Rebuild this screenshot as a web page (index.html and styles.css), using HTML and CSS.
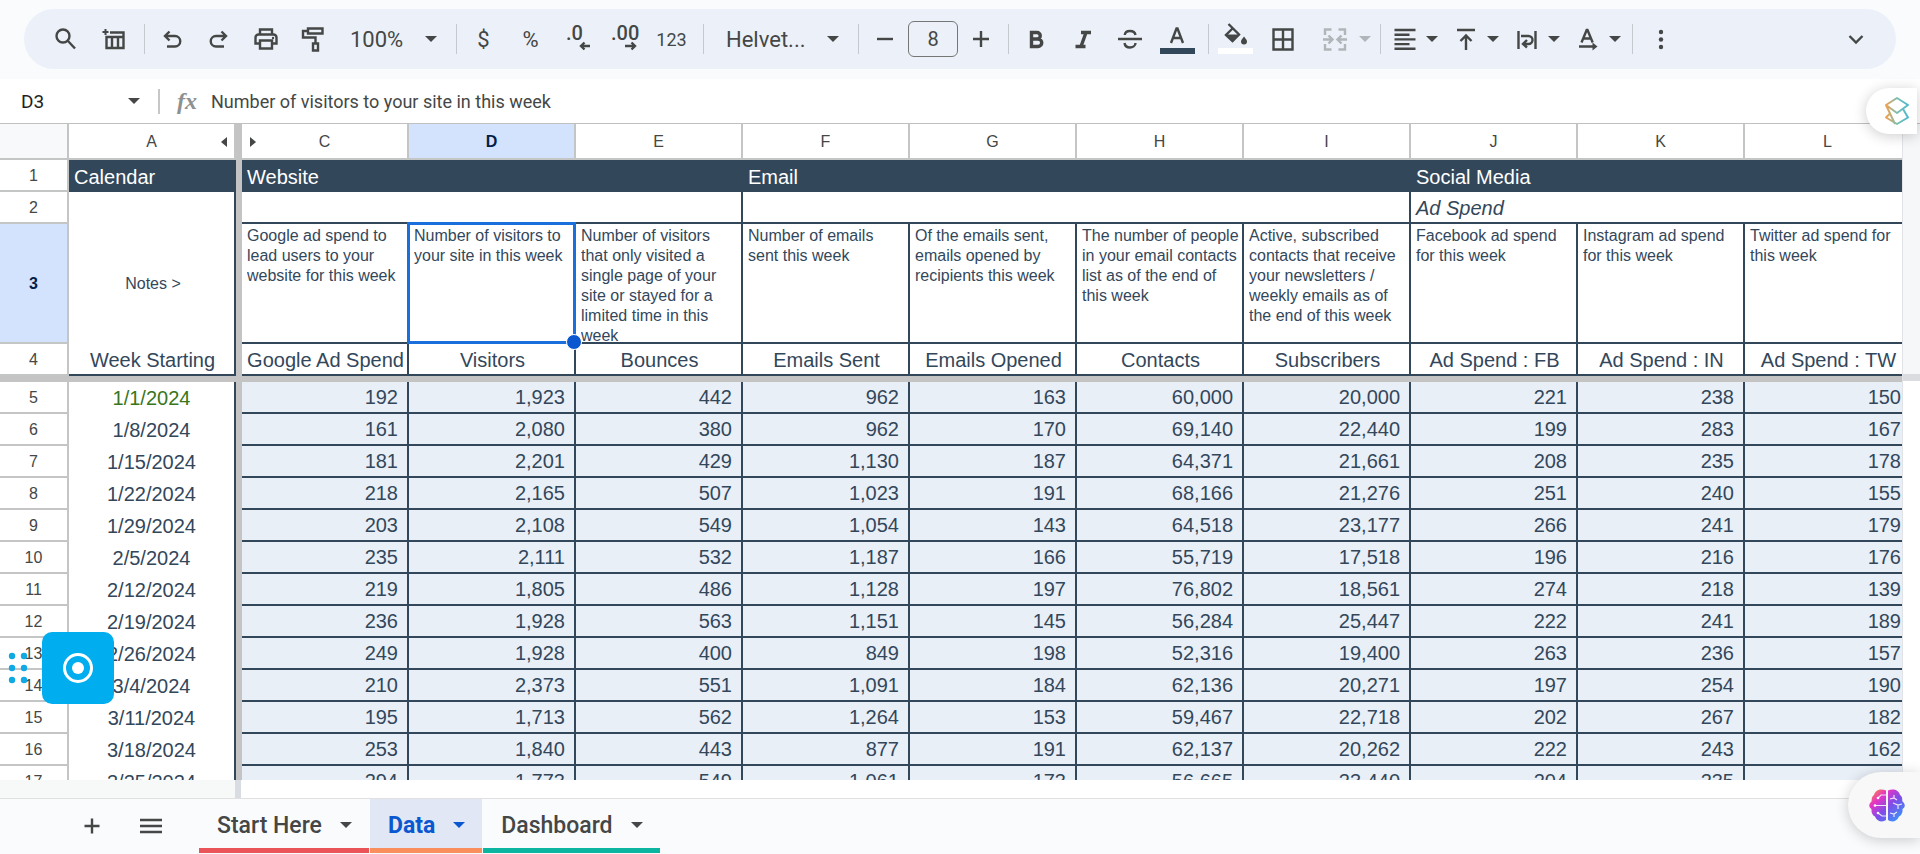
FILE: index.html
```
<!DOCTYPE html>
<html lang="en">
<head>
<meta charset="utf-8">
<title>Data</title>
<link rel="stylesheet" href="styles.css">
</head>
<body>
<header class="toolbar-area">
  <div class="toolbar" role="toolbar">
    <button class="tool" aria-label="Search"><svg class="icon" viewBox="0 0 28 28"><circle cx="12" cy="11" r="6.500"/><path d="M17 16l7 7.500"/></svg></button>
    <button class="tool wide" aria-label="Tables"><svg class="icon" viewBox="0 0 28 28"><path d="M10 7.500h13.500v15.500H6.500v-11h17M12 12v11M18 12v11"/><path class="thin" d="M5.500 4v6M2.500 7h6"/></svg></button>
    <span class="sep"></span>
    <button class="tool" aria-label="Undo"><svg class="icon" viewBox="0 0 28 28"><path d="M11.500 6.500L7 11l4.500 4.500M7 11h10a5 5 0 0 1 0 10.500H9"/></svg></button>
    <button class="tool" aria-label="Redo"><svg class="icon" viewBox="0 0 28 28"><path d="M16.500 6.500L21 11l-4.500 4.500M21 11H11a5 5 0 0 0 0 10.500h8"/></svg></button>
    <button class="tool" aria-label="Print"><svg class="icon" viewBox="0 0 28 28"><path d="M8 9.500V4.500h12v5M7.500 18.500H3.500v-6a3 3 0 0 1 3-3h15a3 3 0 0 1 3 3v6h-4M8 15.500h12v8H8z"/><circle class="fill" cx="21" cy="13" r="1.200"/></svg></button>
    <button class="tool" aria-label="Paint format"><svg class="icon" viewBox="0 0 28 28"><path d="M9 3.500h14.500v5H9zM9 6H4v6.500h12.500V18M14 18.500h5v7h-5z"/></svg></button>
    <span class="pick zoom"><select aria-label="Zoom"><option>100%</option></select><svg class="caret" viewBox="0 0 12 6"><path d="M0 0h12L6 6z"/></svg></span>
    <span class="sep"></span>
    <button class="tool text">$</button>
    <button class="tool text">%</button>
    <button class="tool" aria-label="Decrease decimal places"><svg class="icon decimal" viewBox="0 0 28 28"><text x="2" y="15">.0</text><path d="M26 21H17M20.500 17.500L17 21l3.500 3.500"/></svg></button>
    <button class="tool" aria-label="Increase decimal places"><svg class="icon decimal" viewBox="0 0 28 28"><text x="0" y="15">.00</text><path d="M14 21h10M20.500 17.500L24 21l-3.500 3.500"/></svg></button>
    <button class="tool text small">123</button>
    <span class="sep gap-left"></span>
    <span class="pick font"><select aria-label="Font"><option>Helvet...</option></select><svg class="caret" viewBox="0 0 12 6"><path d="M0 0h12L6 6z"/></svg></span>
    <span class="sep"></span>
    <button class="tool step" aria-label="Decrease font size"><svg class="icon" viewBox="0 0 28 28"><path d="M6 14h16"/></svg></button>
    <input class="size" aria-label="Font size" value="8">
    <button class="tool step" aria-label="Increase font size"><svg class="icon" viewBox="0 0 28 28"><path d="M6 14h16M14 6v16"/></svg></button>
    <span class="sep"></span>
    <button class="tool" aria-label="Bold"><svg class="icon" viewBox="0 0 28 28"><path class="bold" d="M9.500 7.500h5.500a3.200 3.200 0 0 1 0 6.500H9.500zM9.500 14h6.500a3.700 3.700 0 0 1 0 7.500H9.500z"/></svg></button>
    <button class="tool" aria-label="Italic"><svg class="icon" viewBox="0 0 28 28"><path class="bold" d="M12 7.500h10M6.500 21.500h10M17 7.500l-5 14"/></svg></button>
    <button class="tool" aria-label="Strikethrough"><svg class="icon" viewBox="0 0 28 28"><path d="M2 14h24M19.500 10c-.5-3-3-4-5.500-4s-5 1.200-5.200 4M8.500 18c.5 3.200 3 4.500 5.500 4.500s5.500-1.500 5.500-4.500"/></svg></button>
    <button class="tool" aria-label="Text color"><svg class="icon swatch" viewBox="0 0 36 40"><path d="M12 24L17.500 9.500h1L24 24M13.700 19h8.600"/><path class="ink" d="M1 29h35v6H1z"/></svg></button>
    <span class="sep gap-left"></span>
    <button class="tool" aria-label="Fill color"><svg class="icon swatch" viewBox="0 0 36 40"><path d="M10.500 5L21 15.500 14.500 22 8 16l7-7"/><path class="fill" d="M7 15.500h15L14.500 23zM26 17.500c2 2.500 3 3.500 3 5a3 3 0 0 1-6 0c0-1.500 1-2.500 3-5z"/><path class="paper" d="M0 29h35v6H0z"/></svg></button>
    <button class="tool" aria-label="Borders"><svg class="icon" viewBox="0 0 28 28"><path d="M4.500 4.500h19v20h-19zM14 4.500v20M4.500 14.500h19"/></svg></button>
    <button class="tool drop faded" aria-label="Merge cells"><svg class="icon" viewBox="0 0 28 28"><path d="M10.500 4.500H4V10M4 19v5.500h6.500M17.500 4.500H24V10M24 19v5.500h-6.500M2 14.500h8M7.500 10.500l4 4-4 4M26 14.500h-8M20.500 10.500l-4 4 4 4"/></svg><svg class="caret" viewBox="0 0 12 6"><path d="M0 0h12L6 6z"/></svg></button>
    <span class="sep"></span>
    <button class="tool drop" aria-label="Horizontal align"><svg class="icon" viewBox="0 0 28 28"><path d="M3.500 5h21M3.500 9.700h15M3.500 14.400h21M3.500 19.100h15M3.500 23.800h21"/></svg><svg class="caret" viewBox="0 0 12 6"><path d="M0 0h12L6 6z"/></svg></button>
    <button class="tool drop" aria-label="Vertical align"><svg class="icon" viewBox="0 0 28 28"><path d="M5 5h18M14 25V11M8.500 16l5.500-5.500 5.500 5.500"/></svg><svg class="caret" viewBox="0 0 12 6"><path d="M0 0h12L6 6z"/></svg></button>
    <button class="tool drop" aria-label="Text wrapping"><svg class="icon" viewBox="0 0 28 28"><path d="M5.500 6v18M22.500 6v18M8 11h7.500a3.700 3.700 0 0 1 0 8H11M14 15l-4 4 4 3.500"/></svg><svg class="caret" viewBox="0 0 12 6"><path d="M0 0h12L6 6z"/></svg></button>
    <button class="tool drop" aria-label="Text rotation"><svg class="icon" viewBox="0 0 28 28"><path d="M7.500 17.500L12.700 5h.8l5.200 12.500M9.500 13.500h7.500M5 21.500h15"/><path class="fill" d="M18.500 17.500l5 4-5 4z"/></svg><svg class="caret" viewBox="0 0 12 6"><path d="M0 0h12L6 6z"/></svg></button>
    <span class="sep"></span>
    <button class="tool more" aria-label="More"><svg class="icon" viewBox="0 0 28 28"><g class="fill"><circle cx="14" cy="7" r="2.200"/><circle cx="14" cy="14.500" r="2.200"/><circle cx="14" cy="22" r="2.200"/></g></svg></button>
    <button class="tool collapse" aria-label="Hide menus"><svg class="icon" viewBox="0 0 28 28"><path d="M7.500 11l6.500 6.500 6.500-6.500"/></svg></button>
  </div>
</header>

<div class="formula-bar">
  <input class="cell-name" aria-label="Name box" value="D3">
  <svg class="caret" viewBox="0 0 12 6"><path d="M0 0h12L6 6z"/></svg>
  <span class="bar-sep"></span>
  <span class="fx">fx</span>
  <input class="formula" aria-label="Formula" value="Number of visitors to your site in this week">
</div>

<main class="grid-area">
  <div class="sheet">
    <table class="cells">
      <colgroup><col class="c-num"><col class="c-data"><col class="c-freeze"><col class="c-data"><col class="c-data"><col class="c-data"><col class="c-data"><col class="c-data"><col class="c-data"><col class="c-data"><col class="c-data"><col class="c-data"><col class="c-data"></colgroup>
      <thead>
        <tr class="letters"><th class="corner"></th><th><div class="letter">A<svg class="hide left" viewBox="0 0 6 10"><path d="M6 0v10L0 5z"/></svg></div></th><th class="freeze"></th><th><div class="letter">C<svg class="hide right" viewBox="0 0 6 10"><path d="M0 0v10l6-5z"/></svg></div></th><th class="active">D</th><th>E</th><th>F</th><th>G</th><th>H</th><th>I</th><th>J</th><th>K</th><th>L</th></tr>
      </thead>
      <tbody>
        <tr class="band"><th>1</th><td>Calendar</td><td class="freeze"></td><td colspan="3">Website</td><td colspan="4">Email</td><td colspan="3">Social Media</td></tr>
        <tr class="sub"><th>2</th><td class="date"></td><td class="freeze"></td><td colspan="3"></td><td colspan="4"></td><td colspan="3">Ad Spend</td></tr>
        <tr class="notes"><th class="active">3</th><td class="date">Notes &gt;</td><td class="freeze"></td><td><div class="note">Google ad spend to lead users to your website for this week</div></td><td class="selected"><div class="note">Number of visitors to your site in this week</div><span class="outline"></span></td><td><div class="note">Number of visitors that only visited a single page of your site or stayed for a limited time in this week</div></td><td><div class="note">Number of emails sent this week</div></td><td><div class="note">Of the emails sent, emails opened by recipients this week</div></td><td><div class="note">The number of people in your email contacts list as of the end of this week</div></td><td><div class="note">Active, subscribed contacts that receive your newsletters / weekly emails as of the end of this week</div></td><td><div class="note">Facebook ad spend for this week</div></td><td><div class="note">Instagram ad spend for this week</div></td><td><div class="note">Twitter ad spend for this week</div></td></tr>
        <tr class="titles"><th>4</th><td class="date">Week Starting</td><td class="freeze"></td><td>Google Ad Spend</td><td>Visitors</td><td>Bounces</td><td>Emails Sent</td><td>Emails Opened</td><td>Contacts</td><td>Subscribers</td><td>Ad Spend : FB</td><td>Ad Spend : IN</td><td>Ad Spend : TW</td></tr>
        <tr class="freeze-row"><td colspan="13"></td></tr>
        <tr class="data"><th>5</th><td class="date current">1/1/2024</td><td class="freeze"></td><td>192</td><td>1,923</td><td>442</td><td>962</td><td>163</td><td>60,000</td><td>20,000</td><td>221</td><td>238</td><td>150</td></tr>
        <tr class="data"><th>6</th><td class="date">1/8/2024</td><td class="freeze"></td><td>161</td><td>2,080</td><td>380</td><td>962</td><td>170</td><td>69,140</td><td>22,440</td><td>199</td><td>283</td><td>167</td></tr>
        <tr class="data"><th>7</th><td class="date">1/15/2024</td><td class="freeze"></td><td>181</td><td>2,201</td><td>429</td><td>1,130</td><td>187</td><td>64,371</td><td>21,661</td><td>208</td><td>235</td><td>178</td></tr>
        <tr class="data"><th>8</th><td class="date">1/22/2024</td><td class="freeze"></td><td>218</td><td>2,165</td><td>507</td><td>1,023</td><td>191</td><td>68,166</td><td>21,276</td><td>251</td><td>240</td><td>155</td></tr>
        <tr class="data"><th>9</th><td class="date">1/29/2024</td><td class="freeze"></td><td>203</td><td>2,108</td><td>549</td><td>1,054</td><td>143</td><td>64,518</td><td>23,177</td><td>266</td><td>241</td><td>179</td></tr>
        <tr class="data"><th>10</th><td class="date">2/5/2024</td><td class="freeze"></td><td>235</td><td>2,111</td><td>532</td><td>1,187</td><td>166</td><td>55,719</td><td>17,518</td><td>196</td><td>216</td><td>176</td></tr>
        <tr class="data"><th>11</th><td class="date">2/12/2024</td><td class="freeze"></td><td>219</td><td>1,805</td><td>486</td><td>1,128</td><td>197</td><td>76,802</td><td>18,561</td><td>274</td><td>218</td><td>139</td></tr>
        <tr class="data"><th>12</th><td class="date">2/19/2024</td><td class="freeze"></td><td>236</td><td>1,928</td><td>563</td><td>1,151</td><td>145</td><td>56,284</td><td>25,447</td><td>222</td><td>241</td><td>189</td></tr>
        <tr class="data"><th>13</th><td class="date">2/26/2024</td><td class="freeze"></td><td>249</td><td>1,928</td><td>400</td><td>849</td><td>198</td><td>52,316</td><td>19,400</td><td>263</td><td>236</td><td>157</td></tr>
        <tr class="data"><th>14</th><td class="date">3/4/2024</td><td class="freeze"></td><td>210</td><td>2,373</td><td>551</td><td>1,091</td><td>184</td><td>62,136</td><td>20,271</td><td>197</td><td>254</td><td>190</td></tr>
        <tr class="data"><th>15</th><td class="date">3/11/2024</td><td class="freeze"></td><td>195</td><td>1,713</td><td>562</td><td>1,264</td><td>153</td><td>59,467</td><td>22,718</td><td>202</td><td>267</td><td>182</td></tr>
        <tr class="data"><th>16</th><td class="date">3/18/2024</td><td class="freeze"></td><td>253</td><td>1,840</td><td>443</td><td>877</td><td>191</td><td>62,137</td><td>20,262</td><td>222</td><td>243</td><td>162</td></tr>
        <tr class="data"><th>17</th><td class="date">3/25/2024</td><td class="freeze"></td><td>294</td><td>1,773</td><td>549</td><td>1,061</td><td>173</td><td>56,665</td><td>23,440</td><td>204</td><td>235</td><td>150</td></tr>
      </tbody>
    </table>
  </div>
  <div class="v-scroll"><div class="v-frozen"></div><div class="v-handle"></div></div>
</main>
<div class="h-scroll"><div class="h-frozen"></div><div class="h-handle"></div></div>

<footer class="tabs">
  <button class="tab-tool" aria-label="Add sheet"><svg class="icon" viewBox="0 0 28 28"><path d="M6.500 14h15M14 6.500v15"/></svg></button>
  <button class="tab-tool" aria-label="All sheets"><svg class="icon" viewBox="0 0 28 28"><path d="M3 8h22M3 14h22M3 20h22"/></svg></button>
  <nav class="tab-list">
    <button class="tab red">Start Here<svg class="caret" viewBox="0 0 12 6"><path d="M0 0h12L6 6z"/></svg></button>
    <button class="tab orange on">Data<svg class="caret" viewBox="0 0 12 6"><path d="M0 0h12L6 6z"/></svg></button>
    <button class="tab teal">Dashboard<svg class="caret" viewBox="0 0 12 6"><path d="M0 0h12L6 6z"/></svg></button>
  </nav>
</footer>

<div class="recorder">
  <svg class="grip" viewBox="0 0 20 32"><circle cx="4" cy="4" r="3.200"/><circle cx="16" cy="4" r="3.200"/><circle cx="4" cy="16" r="3.200"/><circle cx="16" cy="16" r="3.200"/><circle cx="4" cy="28" r="3.200"/><circle cx="16" cy="28" r="3.200"/></svg>
  <button class="record" aria-label="Record"><svg viewBox="0 0 32 32"><circle cx="16" cy="16" r="13.500"/><circle class="dot" cx="16" cy="16" r="6"/></svg></button>
</div>

<button class="dock dock-top" aria-label="Layers"><svg viewBox="0 0 28 30"><defs><linearGradient id="lay" x1="0" x2="1"><stop offset="0" stop-color="#f0a050"/><stop offset=".5" stop-color="#7cc0b0"/><stop offset="1" stop-color="#4fb8d0"/></linearGradient></defs><path stroke="url(#lay)" d="M14 2l11 7-11 8L3 9zM3 9l9 19M20 13l5 8.500L14 28 3 21.500l4-4"/></svg></button>
<button class="dock dock-bottom" aria-label="Assistant"><svg viewBox="0 0 36 33"><defs><linearGradient id="br" x1="0" y1="0" x2="1" y2="1"><stop offset="0" stop-color="#ff9a1f"/><stop offset=".28" stop-color="#e535c5"/><stop offset=".55" stop-color="#7d4ee8"/><stop offset="1" stop-color="#28a8ff"/></linearGradient></defs><path fill="url(#br)" d="M17 1.500C12-1 6 1 5 6 2 8 3 11 2.500 12.500-.5 15-.5 18 2.500 20 2 24 4 26.500 6 27.500 8 33 14 33.500 17 31zM19 1.500C24-1 30 1 31 6 34 8 33 11 33.500 12.500 36.500 15 36.500 18 33.500 20 34 24 32 26.500 30 27.500 28 33 22 33.500 19 31z"/><path class="wire" d="M17 6h-5l-3 3M17 16.500H6M17 27h-4l-4-3M21 10l4-1 3 2M25 9V6M24 14l5 2 4-1M29 16v4M21 24l4 1 3-2M25 25v3"/><g class="node"><circle cx="9" cy="9" r="1.300"/><circle cx="6" cy="16.500" r="1.300"/><circle cx="9" cy="24" r="1.300"/></g></svg></button>
</body>
</html>
```

FILE: styles.css
```
* { box-sizing: border-box; }

body {
  margin: 0;
  height: 100vh;
  display: flex;
  flex-direction: column;
  overflow: hidden;
  background: #f9fbfd;
  color: #444746;
  font-family: Roboto, "Liberation Sans", sans-serif;
}

button, input, select {
  margin: 0;
  padding: 0;
  border: 0;
  background: none;
  color: inherit;
  font: inherit;
}

svg { display: block; flex: none; }

.icon {
  width: 28px;
  height: 28px;
  fill: none;
  stroke: currentColor;
  stroke-width: 2.4;
}
.icon .fill { fill: currentColor; stroke: none; }
.icon .thin { stroke-width: 2; }
.icon .bold { stroke-width: 3.4; }
.icon .ink { fill: #33475b; stroke: none; }
.icon .paper { fill: #fff; stroke: none; }
.icon.swatch { width: 36px; height: 40px; }
.icon.decimal { overflow: visible; }
.decimal text {
  fill: currentColor;
  stroke: none;
  font-size: 20px;
  font-weight: 500;
}
.caret { width: 12px; height: 6px; fill: currentColor; }

/* Toolbar */
.toolbar-area { padding: 9px 24px 10px; }
.toolbar {
  display: flex;
  align-items: center;
  height: 60px;
  padding: 0 17px;
  border-radius: 30px;
  background: #ecf1f9;
}
.tool {
  display: flex;
  align-items: center;
  justify-content: center;
  flex: none;
  width: 47px;
  height: 40px;
}
.tool.text { font-size: 22px; }
.tool.small { font-size: 18px; }
.tool.wide { width: 52px; }
.tool.step { width: 46px; }
.tool.drop { width: 61px; gap: 7px; }
.tool.faded {
  justify-content: flex-end;
  width: 70px;
  padding-right: 5px;
  gap: 10px;
  opacity: .35;
}
.tool.more { width: 50px; }
.tool.collapse { margin-left: auto; }
.sep {
  flex: none;
  width: 1px;
  height: 30px;
  margin: 0 3px 0 4px;
  background: #c4c9cf;
}
.sep.gap-left { margin-left: 8px; }
.pick { position: relative; display: flex; flex: none; align-items: center; }
.pick select {
  appearance: none;
  width: 100%;
  height: 40px;
  font-size: 22px;
}
.pick .caret { position: absolute; right: 15px; pointer-events: none; }
.pick.zoom { width: 116px; }
.pick.zoom select { padding-left: 14px; }
.pick.font { width: 147px; }
.pick.font select { padding-left: 19px; }
.size {
  flex: none;
  width: 50px;
  height: 36px;
  border: 1px solid #747775;
  border-radius: 6px;
  font-size: 20px;
  text-align: center;
}

/* Formula bar */
.formula-bar {
  display: flex;
  align-items: center;
  height: 45px;
  border-bottom: 1px solid #c0c0c0;
  background: #fff;
}
.formula-bar .caret { margin-right: 18px; }
.cell-name { width: 128px; padding-left: 21px; font-size: 19px; color: #1f1f1f; }
.bar-sep { width: 2px; height: 25px; background: #c7c7c7; }
.fx {
  width: 51px;
  padding-left: 17px;
  color: #8e9190;
  font: italic bold 24px/28px "Liberation Serif", serif;
}
.formula { flex: 1; font-size: 18px; }

/* Grid */
.grid-area { display: flex; flex: 1; min-height: 0; background: #fff; }
.sheet { flex: 1; min-width: 0; overflow: hidden; }
.cells {
  width: 1912px;
  table-layout: fixed;
  border-collapse: separate;
  border-spacing: 0;
  color: #33475b;
  font: 20px/23px "Liberation Sans", sans-serif;
}
.c-num { width: 69px; }
.c-data { width: 167px; }
.c-freeze { width: 6px; }
.cells th {
  height: 32px;
  padding: 0;
  border: 0 solid #c4c6c5;
  border-width: 0 2px 2px 0;
  background: #fff;
  color: #444746;
  font-size: 16px;
  font-weight: 400;
}
.cells .letters th { height: 36px; }
.cells .corner { background: #f8f9fa; }
.cells th.active { background: #d3e3fd; color: #041e49; font-weight: 700; }
.letter { position: relative; }
.hide { position: absolute; top: 7px; width: 6px; height: 10px; fill: #444746; }
.hide.left { right: 7px; }
.hide.right { left: 8px; }

.cells td {
  height: 32px;
  padding: 2px 4px 0 5px;
  border: 0 solid #33475b;
  border-width: 0 2px 2px 0;
}
.cells .freeze { padding: 0; border: 0; background: #c4c4c4; }
.cells .date { border-bottom: 0; text-align: center; }
.cells .current { color: #38761d; }
.band td { border-bottom: 0; background: #33475b; color: #fff; }
.sub td { font-style: italic; }
.cells .notes td { height: 120px; padding: 0 2px 0 5px; }
.notes td, .note { font-size: 16px; line-height: 20px; }
.note { height: 118px; padding-top: 2px; overflow: hidden; }
.titles td { text-align: center; }
.cells .titles td { padding-right: 3px; }
.cells .titles .date { border-bottom: 2px solid #33475b; }
.cells .freeze-row td { height: 6px; padding: 0; border: 0; background: #c4c4c4; }
.cells .data td { padding: 0 9px 0 0; background: #e9eff7; text-align: right; }
.cells .data .date { padding: 0; background: #fff; text-align: center; }
.cells .data .freeze { padding: 0; background: #c4c4c4; }

.selected { position: relative; }
.outline {
  position: absolute;
  inset: -2px;
  border: 3px solid #1a6fdc;
  pointer-events: none;
}
.outline::after {
  content: "";
  position: absolute;
  right: -9px;
  bottom: -9px;
  width: 14px;
  height: 14px;
  border: 1px solid #fff;
  border-radius: 50%;
  background: #0b57d0;
}

.v-scroll { width: 18px; border-left: 1px solid #e1e3e6; background: #fff; }
.v-frozen { height: 250px; background: #f6f7f8; }
.v-handle { height: 7px; background: #dadce0; }
.h-scroll { display: flex; height: 19px; border-bottom: 1px solid #e0e0e0; background: #fff; }
.h-frozen { width: 235px; background: #f7f8f8; }
.h-handle { width: 6px; background: #dadce4; }

/* Sheet tabs */
.tabs { display: flex; height: 55px; padding: 0 0 1px 62px; }
.tab-tool { display: flex; align-items: center; justify-content: center; width: 59px; }
.tab-list { display: flex; gap: 1px; margin-left: 19px; }
.tab {
  display: flex;
  align-items: center;
  gap: 18px;
  padding: 3px 17px 0 18px;
  border-bottom: 5px solid;
  font-size: 23px;
  font-weight: 500;
}
.tab.red { border-color: #ea5459; }
.tab.orange { border-color: #f88f5c; }
.tab.teal { border-color: #0bb5a0; }
.tab.on { background: #e1e7f5; color: #0b57d0; font-weight: 700; }

/* Floating widgets */
.recorder {
  position: absolute;
  left: 8px;
  bottom: 150px;
  display: flex;
  align-items: center;
  gap: 14px;
}
.grip { width: 20px; height: 32px; fill: #0fa9e6; }
.record {
  display: flex;
  align-items: center;
  justify-content: center;
  width: 72px;
  height: 72px;
  border-radius: 10px;
  background: #00aeef;
}
.record svg { width: 32px; height: 32px; fill: none; stroke: #fff; stroke-width: 3; }
.record .dot { fill: #fff; stroke: none; }
.dock {
  position: absolute;
  display: flex;
  align-items: center;
  box-shadow: 0 2px 14px rgba(0, 0, 0, .2);
}
.dock-top {
  top: 88px;
  right: 3px;
  width: 51px;
  height: 46px;
  padding-left: 17px;
  border-radius: 23px 0 0 23px;
  background: #fff;
}
.dock-top svg { width: 28px; height: 30px; fill: none; stroke-width: 2; stroke-linejoin: round; }
.dock-bottom {
  right: 0;
  bottom: 16px;
  width: 72px;
  height: 66px;
  padding-left: 21px;
  border-radius: 33px 0 0 33px;
  background: #f8f8f8;
}
.dock-bottom svg { width: 36px; height: 33px; }
.wire { fill: none; stroke: #fff; stroke-width: 1.2; opacity: .85; }
.node { fill: #fff; }
```
